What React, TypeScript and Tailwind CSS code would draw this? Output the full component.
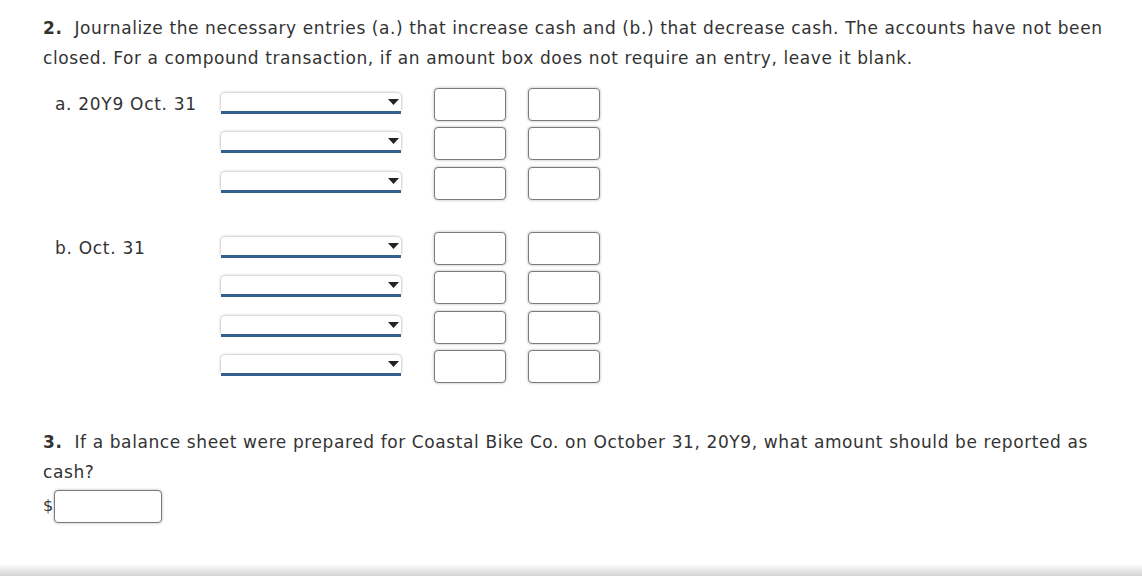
import React from 'react';

const font = { fontFamily: '"DejaVu Sans", Verdana, sans-serif' };

// One account dropdown with its blue underline
const AccountSelect: React.FC = () => (
  <div className="relative w-[180px] h-[21px] mt-[5px]">
    <div className="h-[18px] bg-white rounded-t-[4px] shadow-[0_0_3px_rgba(0,0,0,0.4)]" />
    <div className="h-[3px] bg-[#35608f]" />
    <svg className="absolute right-[2px] top-[6px]" width="11" height="6" viewBox="0 0 11 6">
      <path d="M0 0 H11 L5.5 6 Z" fill="#222" />
    </svg>
  </div>
);

const AmountBox: React.FC<{ w?: string }> = ({ w = 'w-[72px]' }) => (
  <div className={`${w} h-[33px] bg-white border-[1.5px] border-[#7b7b7b] rounded-[4px] shadow-[0_0_3px_rgba(0,0,0,0.3)]`} />
);

const EntryRow: React.FC = () => (
  <div className="flex items-start h-[33px]">
    <AccountSelect />
    <div className="ml-[33px]">
      <AmountBox />
    </div>
    <div className="ml-[22px]">
      <AmountBox />
    </div>
  </div>
);

const EntryGroup: React.FC<{ label: string; rows: number }> = ({ label, rows }) => (
  <div className="flex">
    <div className="w-[178px] pl-[12px] h-[33px] flex items-center text-[17px] tracking-[0.7px] text-[#333]">{label}</div>
    <div className="flex flex-col gap-[6.4px]">
      {Array.from({ length: rows }).map((_, i) => (
        <EntryRow key={i} />
      ))}
    </div>
  </div>
);

export default function App() {
  return (
    <div className="relative w-[1142px] h-[576px] bg-white text-[#333] overflow-hidden" style={font}>
      <div className="pl-[43px] pt-[13px]">
        <p className="text-[17px] tracking-[0.6px] leading-[30px] whitespace-nowrap">
          <b>2.</b>&nbsp; Journalize the necessary entries (a.) that increase cash and (b.) that decrease cash. The accounts have not been
          <br />
          closed. For a compound transaction, if an amount box does not require an entry, leave it blank.
        </p>

        <div className="mt-[15px]">
          <EntryGroup label="a. 20Y9 Oct. 31" rows={3} />
        </div>
        <div className="mt-[32px]">
          <EntryGroup label="b. Oct. 31" rows={4} />
        </div>

        <p className="mt-[44px] text-[17px] tracking-[0.6px] leading-[30px] whitespace-nowrap">
          <b>3.</b>&nbsp; If a balance sheet were prepared for Coastal Bike Co. on October 31, 20Y9, what amount should be reported as
          <br />
          cash?
        </p>
        <div className="mt-[3px] flex items-center">
          <span className="text-[16px] w-[11px]">$</span>
          <AmountBox w="w-[108px]" />
        </div>
      </div>
      <div className="absolute left-0 right-0 bottom-0 h-[12px] bg-gradient-to-b from-white to-[#d4d4d4]" />
    </div>
  );
}
